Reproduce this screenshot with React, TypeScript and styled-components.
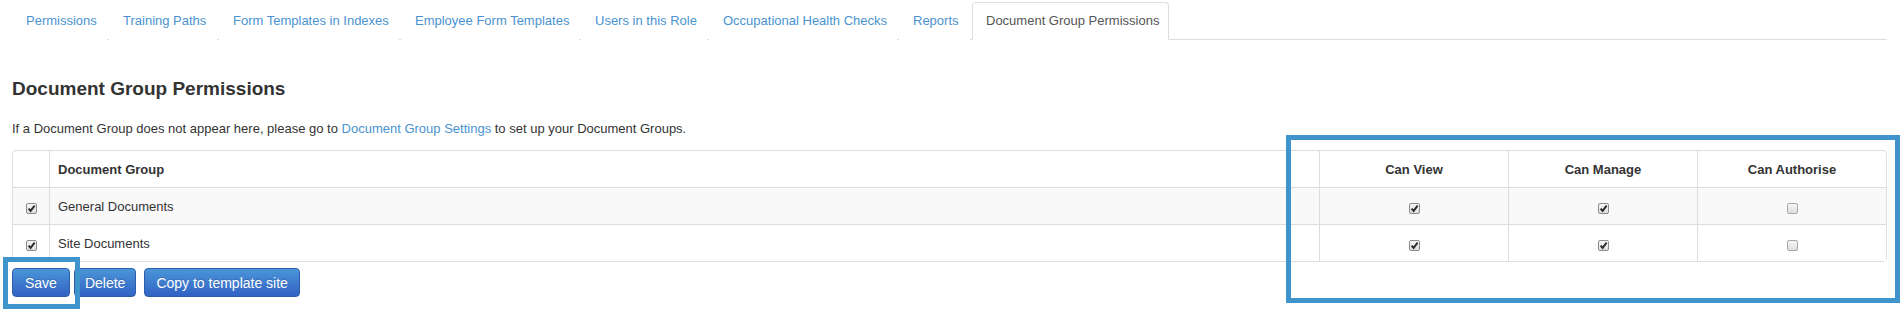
import React from 'react';
import styled, { createGlobalStyle } from 'styled-components';

interface Tab {
  label: string;
  width: number;
  active?: boolean;
}

interface GroupRow {
  name: string;
  selected: boolean;
  canView: boolean;
  canManage: boolean;
  canAuthorise: boolean;
}

const tabs: Tab[] = [
  { label: 'Permissions', width: 95 },
  { label: 'Training Paths', width: 108 },
  { label: 'Form Templates in Indexes', width: 180 },
  { label: 'Employee Form Templates', width: 178 },
  { label: 'Users in this Role', width: 126 },
  { label: 'Occupational Health Checks', width: 188 },
  { label: 'Reports', width: 71 },
  { label: 'Document Group Permissions', width: 197, active: true },
];

const rows: GroupRow[] = [
  { name: 'General Documents', selected: true, canView: true, canManage: true, canAuthorise: false },
  { name: 'Site Documents', selected: true, canView: true, canManage: true, canAuthorise: false },
];

const GlobalStyle = createGlobalStyle`
  html, body {
    margin: 0;
    padding: 0;
    background: #ffffff;
  }

  body {
    font-family: "Liberation Sans", Arial, Helvetica, sans-serif;
    font-size: 13px;
    color: #333333;
  }

  * {
    box-sizing: border-box;
  }
`;

const Page = styled.div`
  position: relative;
  height: 314px;
  padding: 2px 13px 0 12px;
  overflow: hidden;
`;

const TabBar = styled.ul`
  display: flex;
  margin: 0;
  padding: 0;
  list-style: none;
  border-bottom: 1px solid #dddddd;
`;

const TabItem = styled.li<{ $active?: boolean; $width: number }>`
  width: ${p => p.$width}px;
  height: 38px;
  margin: 0 2px -1px 0;
  padding: 0 0 0 13px;
  line-height: 36px;
  white-space: nowrap;
  font-size: 13px;
  color: ${p => (p.$active ? '#555555' : '#4a93d0')};
  border: 1px solid ${p => (p.$active ? '#dddddd' : 'transparent')};
  border-bottom-color: ${p => (p.$active ? '#ffffff' : 'transparent')};
  border-radius: 4px 4px 0 0;
  background: #ffffff;
  cursor: pointer;
`;

const Heading = styled.h3`
  margin: 38px 0 0;
  font-size: 19px;
  line-height: 22px;
  font-weight: bold;
  color: #333333;
`;

const Intro = styled.p`
  margin: 20px 0 0;
  font-size: 13px;
  line-height: 18px;
`;

const Link = styled.a`
  color: #4a93d0;
  text-decoration: none;
`;

const Table = styled.table`
  width: 100%;
  margin-top: 12px;
  table-layout: fixed;
  border-collapse: separate;
  border-spacing: 0;
  border: 1px solid #dddddd;
  border-radius: 4px;
`;

const HeadCell = styled.th<{ $width?: number; $center?: boolean }>`
  width: ${p => (p.$width ? `${p.$width}px` : 'auto')};
  height: 36px;
  padding: 0 8px;
  font-size: 13px;
  font-weight: bold;
  color: #333333;
  text-align: ${p => (p.$center ? 'center' : 'left')};
  vertical-align: middle;

  & + & {
    border-left: 1px solid #dddddd;
  }
`;

const BodyRow = styled.tr<{ $striped: boolean }>`
  background: ${p => (p.$striped ? '#f9f9f9' : '#ffffff')};
`;

const Cell = styled.td<{ $center?: boolean }>`
  height: 37px;
  padding: 0 8px;
  border-top: 1px solid #dddddd;
  font-size: 13px;
  color: #333333;
  text-align: ${p => (p.$center ? 'center' : 'left')};
  vertical-align: middle;

  & + & {
    border-left: 1px solid #dddddd;
  }
`;

const CheckBox = styled.span<{ $checked: boolean }>`
  display: block;
  width: 11px;
  height: 11px;
  margin: 5px auto 0;
  border: 1px solid ${p => (p.$checked ? '#8c8c8c' : '#a8a8a8')};
  border-radius: 2px;
  background: linear-gradient(to bottom, #f6f6f6 0%, #dedede 100%);

  svg {
    display: block;
  }
`;

const ButtonRow = styled.div`
  display: flex;
  margin-top: 6px;
`;

const Button = styled.button<{ $gap?: number; $pad?: number }>`
  height: 29px;
  margin-right: ${p => p.$gap ?? 4}px;
  padding: 0 ${p => p.$pad ?? 11}px;
  font-family: "Liberation Sans", Arial, Helvetica, sans-serif;
  font-size: 14px;
  color: #ffffff;
  border: 1px solid #2e5eab;
  border-radius: 4px;
  background: linear-gradient(to bottom, #4b96d8 0%, #3162c4 100%);
  text-shadow: 0 -1px 0 rgba(0, 0, 0, 0.15);
  cursor: pointer;
`;

// annotation frames drawn over the screenshot
const Highlight = styled.div<{ $left: number; $top: number; $width: number; $height: number }>`
  position: absolute;
  left: ${p => p.$left}px;
  top: ${p => p.$top}px;
  width: ${p => p.$width}px;
  height: ${p => p.$height}px;
  border: 5px solid #3f95cb;
  pointer-events: none;
`;

const Check: React.FC<{ checked: boolean }> = ({ checked }) => (
  <CheckBox $checked={checked}>
    {checked && (
      <svg width="9" height="9" viewBox="0 0 9 9">
        <path d="M1.6 4.6 L3.6 6.9 L7.6 1.6" fill="none" stroke="#2b2b2b" strokeWidth="1.9" />
      </svg>
    )}
  </CheckBox>
);

const App: React.FC = () => {
  return (
    <Page>
      <GlobalStyle />
      <TabBar>
        {tabs.map(tab => (
          <TabItem key={tab.label} $active={tab.active} $width={tab.width}>
            {tab.label}
          </TabItem>
        ))}
      </TabBar>

      <Heading>Document Group Permissions</Heading>
      <Intro>
        If a Document Group does not appear here, please go to{' '}
        <Link href="#">Document Group Settings</Link> to set up your Document Groups.
      </Intro>

      <Table>
        <thead>
          <tr>
            <HeadCell $width={36} />
            <HeadCell>Document Group</HeadCell>
            <HeadCell $width={189} $center>Can View</HeadCell>
            <HeadCell $width={189} $center>Can Manage</HeadCell>
            <HeadCell $width={189} $center>Can Authorise</HeadCell>
          </tr>
        </thead>
        <tbody>
          {rows.map((row, index) => (
            <BodyRow key={row.name} $striped={index % 2 === 0}>
              <Cell $center><Check checked={row.selected} /></Cell>
              <Cell>{row.name}</Cell>
              <Cell $center><Check checked={row.canView} /></Cell>
              <Cell $center><Check checked={row.canManage} /></Cell>
              <Cell $center><Check checked={row.canAuthorise} /></Cell>
            </BodyRow>
          ))}
        </tbody>
      </Table>

      <ButtonRow>
        <Button $pad={12}>Save</Button>
        <Button $gap={8} $pad={10}>Delete</Button>
        <Button>Copy to template site</Button>
      </ButtonRow>

      <Highlight $left={3} $top={257} $width={77} $height={52} />
      <Highlight $left={1286} $top={135} $width={614} $height={168} />
    </Page>
  );
};

export default App;
